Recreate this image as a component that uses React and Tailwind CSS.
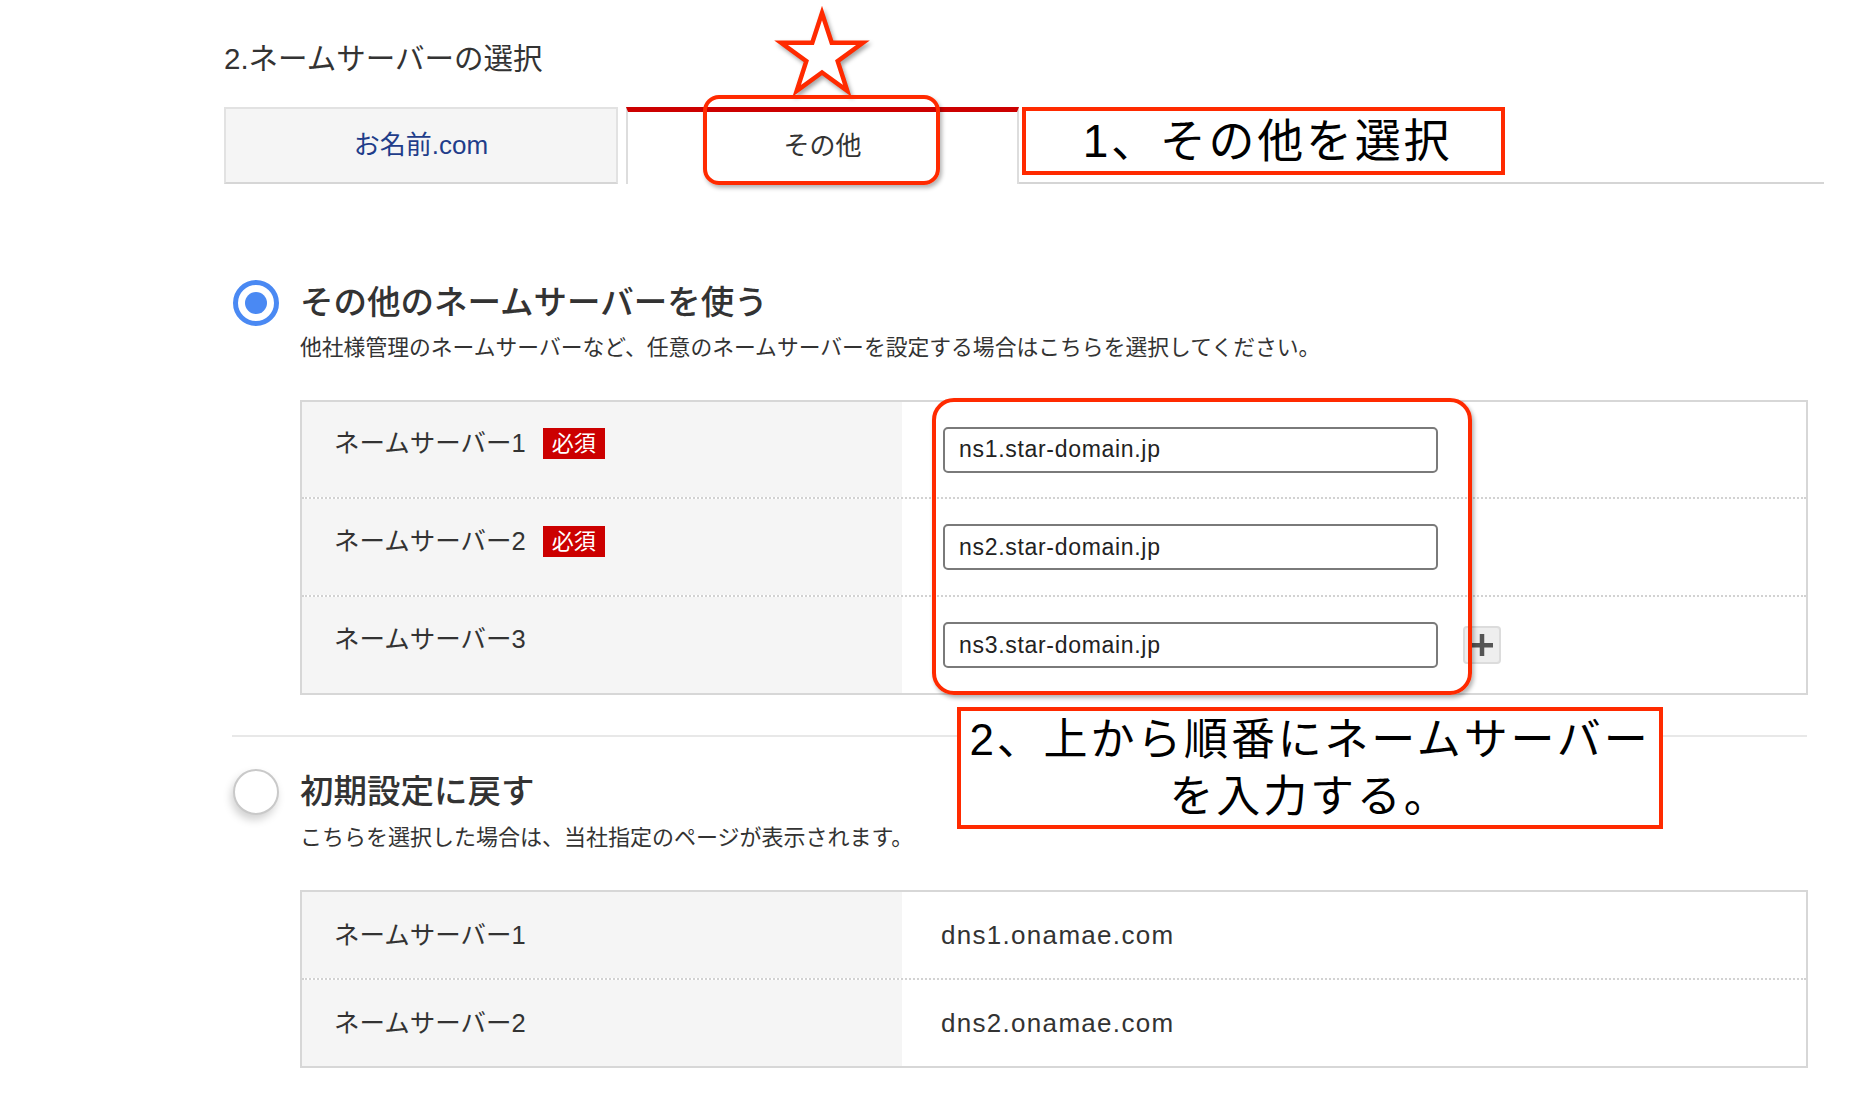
import React from 'react';

const FONT = "font-['Liberation_Sans','Noto_Sans_CJK_JP',sans-serif]";

function Radio({ checked }) {
  if (checked) {
    return (
      <span className="flex h-[46px] w-[46px] shrink-0 items-center justify-center rounded-full border-[5px] border-[#4a89f3] bg-white">
        <span className="h-[22px] w-[22px] rounded-full bg-[#4a89f3]" />
      </span>
    );
  }
  return (
    <span className="h-[46px] w-[46px] shrink-0 rounded-full border-2 border-[#c9c9c9] bg-white shadow-[-2px_5px_8px_rgba(0,0,0,0.18)]" />
  );
}

function Badge() {
  return (
    <span className="ml-[17px] inline-block h-[31px] bg-[#cc0000] px-[9px] text-[22px] leading-[31px] text-white">
      必須
    </span>
  );
}

function PlusButton() {
  return (
    <button
      type="button"
      className="ml-[25px] flex h-[38px] w-[38px] items-center justify-center rounded-[4px] border-2 border-[#dcdcdc] bg-[#eeeeee]"
      aria-label="追加"
    >
      <svg width="22" height="22" viewBox="0 0 22 22" aria-hidden>
        <rect x="0" y="9" width="22" height="4.5" fill="#555" />
        <rect x="8.75" y="0" width="4.5" height="22" fill="#555" />
      </svg>
    </button>
  );
}

function ServerRow({ label, required, value, plus, first, height }) {
  return (
    <div
      className={
        'flex ' +
        height +
        (first ? '' : ' border-t-2 border-dotted border-[#d2d2d2]')
      }
    >
      <div className="flex w-[600px] shrink-0 items-center bg-[#f5f5f5] pb-[12px] pl-[32px]">
        <span className="text-[25.5px] text-[#333]">{label}</span>
        {required ? <Badge /> : null}
      </div>
      <div className="flex flex-1 items-center pl-[41px]">
        <input
          readOnly
          value={value}
          className="h-[46px] w-[495px] rounded-[5px] border-2 border-[#7a7a7a] bg-white pl-[14px] text-[23px] tracking-[0.03em] text-[#222] outline-none"
        />
        {plus ? <PlusButton /> : null}
      </div>
    </div>
  );
}

function DefaultRow({ label, value, first, height }) {
  return (
    <div
      className={
        'flex ' +
        height +
        (first ? '' : ' border-t-2 border-dotted border-[#d2d2d2]')
      }
    >
      <div className="flex w-[600px] shrink-0 items-center bg-[#f5f5f5] pl-[32px]">
        <span className="text-[25.5px] text-[#333]">{label}</span>
      </div>
      <div className="flex flex-1 items-center pl-[39px]">
        <span className="text-[26px] tracking-[0.05em] text-[#333]">{value}</span>
      </div>
    </div>
  );
}

function Star() {
  return (
    <svg
      className="absolute left-[772px] top-[6px] drop-shadow-[2px_3px_2px_rgba(0,0,0,0.35)]"
      width="100"
      height="100"
      viewBox="0 0 100 100"
      aria-hidden
    >
      <polygon
        points="50,7 59.7,36.65 90.9,36.71 65.69,55.1 75.28,84.79 50,66.5 24.72,84.79 34.31,55.1 9.1,36.71 40.3,36.65"
        fill="#fff"
        stroke="#ff2a00"
        strokeWidth="4.5"
        strokeLinejoin="miter"
      />
    </svg>
  );
}

export default function App() {
  return (
    <div className={'relative h-[1100px] w-[1863px] overflow-hidden bg-white text-[#333] ' + FONT}>
      <div className="ml-[224px] w-[1600px] pt-[41px]">
        <h2 className="text-[29.5px] leading-[36px] text-[#333]">2.ネームサーバーの選択</h2>

        {/* tabs */}
        <div className="mt-[30px] flex h-[77px]">
          <div className="flex w-[394px] items-center justify-center border-2 border-[#e2e2e2] border-b-[#d6d6d6] bg-[#f5f5f5] text-[26px] text-[#1f3d8a]">
            お名前.com
          </div>
          <div className="ml-[8px] flex w-[393px] items-center justify-center border-x-2 border-t-[5px] border-x-[#dddddd] border-t-[#cc0000] bg-white pb-[3px] text-[26px] text-[#333]">
            その他
          </div>
          <div className="flex-1 border-b-2 border-[#d5d5d5]" />
        </div>

        {/* other name servers */}
        <div className="ml-[9px] mt-[96px]">
          <div className="flex items-center gap-[21px]">
            <Radio checked />
            <h3 className="text-[33.5px] font-medium leading-[40px] text-[#333]">
              その他のネームサーバーを使う
            </h3>
          </div>
          <p className="ml-[67px] mt-[7px] text-[21.8px] leading-[30px] text-[#333]">
            他社様管理のネームサーバーなど、任意のネームサーバーを設定する場合はこちらを選択してください。
          </p>
          <div className="ml-[67px] mt-[37px] w-[1508px] border-2 border-[#d7d7d7]">
            <ServerRow first height="h-[95px]" label="ネームサーバー1" required value="ns1.star-domain.jp" />
            <ServerRow height="h-[98px]" label="ネームサーバー2" required value="ns2.star-domain.jp" />
            <ServerRow height="h-[98px]" label="ネームサーバー3" value="ns3.star-domain.jp" plus />
          </div>
        </div>

        <div className="ml-[8px] mt-[40px] w-[1575px] border-t-2 border-[#e8e8e8]" />

        {/* reset to default */}
        <div className="ml-[9px] mt-[32px]">
          <div className="flex items-center gap-[21px]">
            <Radio />
            <h3 className="text-[33.5px] font-medium leading-[40px] text-[#333]">初期設定に戻す</h3>
          </div>
          <p className="ml-[67px] mt-[8px] text-[22px] leading-[30px] text-[#333]">
            こちらを選択した場合は、当社指定のページが表示されます。
          </p>
          <div className="ml-[67px] mt-[37px] w-[1508px] border-2 border-[#d7d7d7]">
            <DefaultRow first height="h-[86px]" label="ネームサーバー1" value="dns1.onamae.com" />
            <DefaultRow height="h-[88px]" label="ネームサーバー2" value="dns2.onamae.com" />
          </div>
        </div>
      </div>

      {/* annotations */}
      <Star />
      <div className="absolute left-[703px] top-[95px] h-[90px] w-[237px] rounded-[16px] border-4 border-[#ff2a00] shadow-[2px_3px_4px_rgba(0,0,0,0.3)]" />
      <div className="absolute left-[1022px] top-[107px] flex h-[68px] w-[483px] items-center justify-center border-4 border-[#ff2a00] bg-white">
        <span className="whitespace-nowrap pl-[8px] text-[46px] leading-[56px] tracking-[0.06em] text-black">1、その他を選択</span>
      </div>
      <div className="absolute left-[932px] top-[398px] h-[297px] w-[540px] rounded-[22px] border-4 border-[#ff2a00] shadow-[2px_3px_4px_rgba(0,0,0,0.3)]" />
      <div className="absolute left-[957px] top-[707px] flex h-[122px] w-[706px] flex-col items-center justify-center border-4 border-[#ff2a00] bg-white text-black">
        <span className="whitespace-nowrap text-[44px] leading-[57px] tracking-[0.064em]">2、上から順番にネームサーバー</span>
        <span className="whitespace-nowrap text-[44px] leading-[57px] tracking-[0.064em]">を入力する。</span>
      </div>
    </div>
  );
}
